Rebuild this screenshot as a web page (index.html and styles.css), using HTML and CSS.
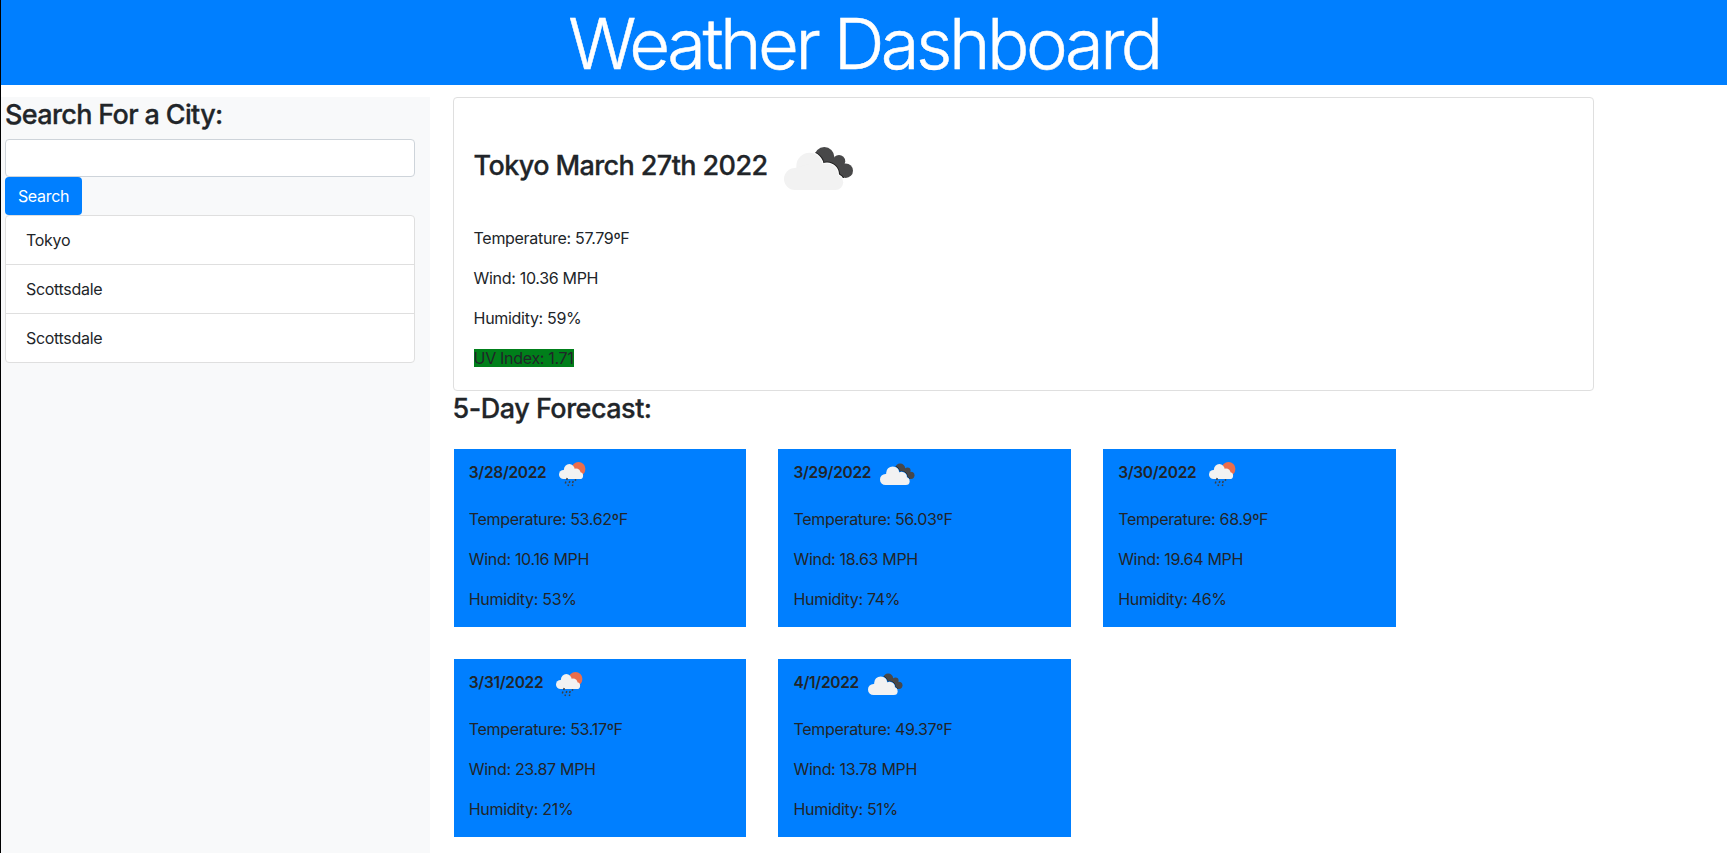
FILE: index.html
```
<!DOCTYPE html>
<html lang="en">
<head>
<meta charset="utf-8">
<title>Weather Dashboard</title>
<link rel="stylesheet" href="styles.css">
</head>
<body>
<svg class="sprite" width="0" height="0" aria-hidden="true">
  <defs>
    <g id="cloud-front">
      <circle cx="21" cy="61" r="11"/><circle cx="35.5" cy="48" r="13.2"/><circle cx="53" cy="56.5" r="11"/><circle cx="61.5" cy="64.3" r="7.7"/>
      <path d="M21 50L35 46L53 56L61.500 64.300V72H21Z"/>
    </g>
    <g id="cloud-back">
      <circle cx="50.300" cy="39" r="10"/><circle cx="65" cy="43.200" r="6.200"/><circle cx="71.700" cy="52.700" r="7.300"/>
      <path d="M50 34L65 43L72 53L70 60L58 58L40 44Z"/>
    </g>
    <mask id="behind" maskUnits="userSpaceOnUse" x="0" y="0" width="100" height="100">
      <rect width="100" height="100" fill="#fff"/>
      <use href="#cloud-front" fill="#000" stroke="#000" stroke-width="2"/>
    </mask>
    <clipPath id="back-clip">
      <circle cx="50.300" cy="39" r="10"/><circle cx="65" cy="43.200" r="6.200"/><circle cx="71.700" cy="52.700" r="7.300"/>
      <path d="M50 34L65 43L72 53L70 60L58 58L40 44Z"/>
    </clipPath>
    <symbol id="clouds" viewBox="0 0 100 100">
      <g mask="url(#behind)">
        <use href="#cloud-back" fill="#484849"/>
        <g clip-path="url(#back-clip)"><use href="#cloud-front" fill="none" stroke="#222" stroke-width="4"/></g>
      </g>
      <use href="#cloud-front" fill="#f2f2f2"/>
    </symbol>
    <symbol id="rain" viewBox="0 0 50 50">
      <circle cx="28.500" cy="20" r="6.900" fill="#ec6e4c"/>
      <g fill="#f2f2f2">
        <circle cx="13.600" cy="25.500" r="4.600"/><circle cx="19.300" cy="20.500" r="5.400"/><circle cx="26" cy="24" r="4.600"/><circle cx="29.700" cy="26.700" r="3.400"/>
        <path d="M13.600 21L19 20L26 23L29.700 26V30.100H13.600Z"/>
      </g>
      <path d="M17.200 29L16.700 31M15.900 32.500L15.300 34.500M19.800 32L19.200 34M23.200 32L22.600 34M18.500 35.500L18 37M22.800 35.500L22.300 37M25.700 30.200L25.300 31.800" fill="none" stroke="#3c3f44" stroke-width="1.500"/>
    </symbol>
  </defs>
</svg>
<div class="page">
  <header class="header"><h1 class="title">Weather Dashboard</h1></header>
  <div class="layout">
    <aside class="sidebar">
      <h3 class="heading">Search For a City:</h3>
      <input class="field" type="text" aria-label="City">
      <button class="btn" type="button">Search</button>
      <ul class="history">
        <li>Tokyo</li>
        <li>Scottsdale</li>
        <li>Scottsdale</li>
      </ul>
    </aside>
    <main class="content">
      <section class="current">
        <h3 class="heading">Tokyo March 27th 2022 <svg class="icon-lg"><use href="#clouds"/></svg></h3>
        <p>Temperature: 57.79ºF</p>
        <p>Wind: 10.36 MPH</p>
        <p>Humidity: 59%</p>
        <p><span class="uv">UV Index: 1.71</span></p>
      </section>
      <h3 class="heading forecast-title">5-Day Forecast:</h3>
      <section class="forecast">
        <article class="day">
          <h6 class="date">3/28/2022 <svg class="icon"><use href="#rain"/></svg></h6>
          <p>Temperature: 53.62ºF</p><p>Wind: 10.16 MPH</p><p>Humidity: 53%</p>
        </article>
        <article class="day">
          <h6 class="date">3/29/2022 <svg class="icon"><use href="#clouds"/></svg></h6>
          <p>Temperature: 56.03ºF</p><p>Wind: 18.63 MPH</p><p>Humidity: 74%</p>
        </article>
        <article class="day">
          <h6 class="date">3/30/2022 <svg class="icon"><use href="#rain"/></svg></h6>
          <p>Temperature: 68.9ºF</p><p>Wind: 19.64 MPH</p><p>Humidity: 46%</p>
        </article>
        <article class="day">
          <h6 class="date">3/31/2022 <svg class="icon"><use href="#rain"/></svg></h6>
          <p>Temperature: 53.17ºF</p><p>Wind: 23.87 MPH</p><p>Humidity: 21%</p>
        </article>
        <article class="day">
          <h6 class="date">4/1/2022 <svg class="icon"><use href="#clouds"/></svg></h6>
          <p>Temperature: 49.37ºF</p><p>Wind: 13.78 MPH</p><p>Humidity: 51%</p>
        </article>
      </section>
    </main>
  </div>
</div>
</body>
</html>
```
FILE: styles.css
```
* { box-sizing: border-box; }
html, body { height: 100%; }
body {
  margin: 0;
  overflow: hidden;
  background: #fff;
  color: #212529;
  font: 400 16px/24px Inter, "Liberation Sans", sans-serif;
  letter-spacing: -0.31px;
}
h1, h3, h6, p, ul { margin: 0; padding: 0; }
.sprite { position: absolute; }
.page {
  display: flex;
  flex-direction: column;
  height: 100%;
  border-left: 1px solid #000;
}
.header {
  height: 85px;
  flex: none;
  background: #007fff;
  color: #fff;
  text-align: center;
}
.title {
  font-size: 70.5px;
  font-weight: 300;
  line-height: 88px;
  letter-spacing: -3.5px;
  -webkit-text-stroke: 0.5px #fff;
}
.layout {
  display: flex;
  flex: 1;
  gap: 22.6px;
  padding-top: 12px;
  min-height: 0;
}
.sidebar {
  width: 429px;
  flex: none;
  padding: 0 15px 0 4px;
  background: #f8f9fa;
}
.heading {
  font-size: 27px;
  font-weight: 500;
  line-height: 36px;
  letter-spacing: -0.65px;
  margin-bottom: 6px;
  -webkit-text-stroke: 0.3px #212529;
}
.field {
  display: block;
  width: 100%;
  height: 38px;
  border: 1px solid #ced4da;
  border-radius: 4px;
  background: #fff;
}
.btn {
  display: block;
  width: 77px;
  height: 38px;
  padding: 0;
  border: 0;
  border-radius: 4px;
  background: #007fff;
  color: #fff;
  font: inherit;
  letter-spacing: inherit;
}
.history {
  list-style: none;
  border: 1px solid #dfdfdf;
  border-radius: 4px;
  background: #fff;
}
.history li { height: 48px; padding: 12px 20px; }
.history li + li { height: 49px; border-top: 1px solid #dfdfdf; }
.content { width: 1141px; }
.current {
  height: 294px;
  padding: 20px;
  border: 1px solid #dfdfdf;
  border-radius: 4px;
}
.current .heading {
  height: 100px;
  margin-bottom: 8px;
  line-height: 34px;
  letter-spacing: -0.6px;
}
.current p, .day p { margin-bottom: 16px; }
.icon-lg { width: 100px; height: 100px; vertical-align: middle; }
.icon { width: 50px; height: 50px; vertical-align: middle; }
.uv { display: inline-block; height: 18px; line-height: 18px; background: #007f1a; }
.forecast-title { margin-bottom: 22px; letter-spacing: -0.5px; }
.forecast {
  display: grid;
  grid-template-columns: repeat(3, 292.7px);
  gap: 32px;
  padding-left: 1.2px;
}
.day { height: 178px; padding: 0 15px; background: #007fff; }
.date {
  height: 50px;
  margin-bottom: 8px;
  font-size: 15.5px;
  font-weight: 600;
  line-height: 24px;
  letter-spacing: -0.3px;
}
```
